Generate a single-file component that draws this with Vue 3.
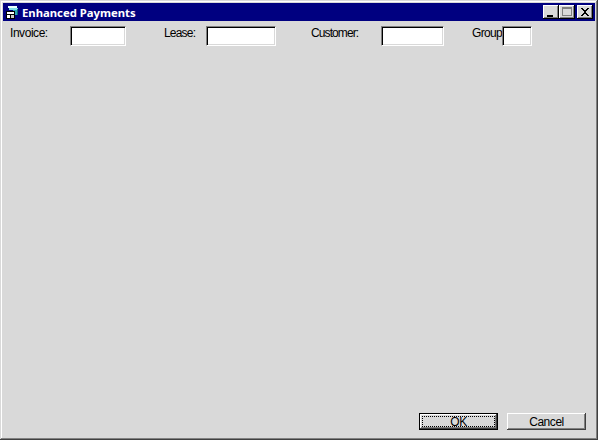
<script setup>
const fields = [
  { label: 'Invoice:', labelWidth: 60, inputWidth: 56, gapAfter: 38, tracking: -0.45 },
  { label: 'Lease:', labelWidth: 42, inputWidth: 70, gapAfter: 35, tracking: -0.8 },
  { label: 'Customer:', labelWidth: 70, inputWidth: 63, gapAfter: 28, tracking: -0.9 },
  { label: 'Group', labelWidth: 30, inputWidth: 30, gapAfter: 0, tracking: -0.7 },
]
</script>

<template>
  <div class="window">
    <div class="titlebar">
      <svg class="app-icon" width="16" height="16" viewBox="0 0 16 16" shape-rendering="crispEdges">
        <rect x="3" y="2" width="9" height="2" fill="#e8ffff" />
        <rect x="4" y="4" width="9" height="2" fill="#7fdce8" />
        <rect x="8" y="6" width="5" height="5" fill="#2aa6b8" />
        <rect x="12" y="5" width="1" height="6" fill="#0f6a7a" />
        <rect x="1" y="7" width="9" height="8" fill="#000" />
        <rect x="2" y="8" width="7" height="2" fill="#fff" />
        <rect x="2" y="11" width="3" height="3" fill="#fff" />
        <rect x="6" y="11" width="3" height="3" fill="#c8c8c8" />
      </svg>
      <span class="title">Enhanced Payments</span>
      <div class="caption-buttons">
        <button class="caption-btn" type="button" aria-label="Minimize">
          <svg width="16" height="14" viewBox="0 0 16 14" shape-rendering="crispEdges"><rect x="4" y="10" width="6" height="2" fill="#000" /></svg>
        </button>
        <button class="caption-btn" type="button" aria-label="Maximize">
          <svg width="16" height="14" viewBox="0 0 16 14" shape-rendering="crispEdges"><path d="M3.5 2.5h9v8h-9z" fill="none" stroke="#808080" /><rect x="3" y="2" width="10" height="2" fill="#808080" /></svg>
        </button>
        <button class="caption-btn close" type="button" aria-label="Close">
          <svg width="16" height="14" viewBox="0 0 16 14" shape-rendering="crispEdges"><path d="M4 3h2v1h1v1h2V4h1V3h2v1h-1v1h-1v1H9v2h1v1h1v1h1v1h-2v-1H9V9H7v1H6v1H4v-1h1V9h1V8h1V6H6V5H5V4H4z" fill="#000" /></svg>
        </button>
      </div>
    </div>

    <div class="filters">
      <div v-for="f in fields" :key="f.label" class="field" :style="{ marginRight: f.gapAfter + 'px' }">
        <label class="label" :style="{ width: f.labelWidth + 'px', letterSpacing: f.tracking + 'px' }">{{ f.label }}</label>
        <input class="input" type="text" :style="{ width: f.inputWidth + 'px' }" />
      </div>
    </div>

    <div class="spacer"></div>

    <div class="actions">
      <button class="btn default" type="button"><span class="focus">OK</span></button>
      <button class="btn" type="button">Cancel</button>
    </div>
  </div>
</template>

<style>
html, body { margin: 0; padding: 0; background: #d9d9d9; }
</style>

<style scoped>
.window {
  width: 598px;
  height: 440px;
  box-sizing: border-box;
  display: flex;
  flex-direction: column;
  padding: 3px;
  background: #d9d9d9;
  box-shadow: inset -1px -1px 0 #404040, inset 1px 1px 0 #d9d9d9, inset -2px -2px 0 #808080, inset 2px 2px 0 #fff;
  font-family: "Liberation Sans", Arial, sans-serif;
  font-size: 12px;
  letter-spacing: -0.45px;
  color: #000;
}
.titlebar {
  height: 18px;
  flex: none;
  background: #000080;
  display: flex;
  align-items: center;
  padding: 0 2px;
  box-sizing: border-box;
  letter-spacing: 0;
}
.app-icon { flex: none; margin-right: 1px; }
.title {
  font-family: "Noto Sans", "DejaVu Sans", sans-serif;
  font-weight: 700;
  font-size: 11.3px;
  color: #fff;
  white-space: nowrap;
}
.caption-buttons { margin-left: auto; display: flex; }
.caption-btn {
  width: 16px;
  height: 14px;
  padding: 0;
  margin: 0;
  border: 0;
  background: #d9d9d9;
  box-shadow: inset -1px -1px 0 #000, inset 1px 1px 0 #fff, inset -2px -2px 0 #808080;
  display: block;
  position: relative;
}
.caption-btn svg { display: block; }
.caption-btn.close { margin-left: 2px; }
.filters {
  display: flex;
  align-items: flex-start;
  padding: 5px 0 0 7px;
  flex: none;
}
.field { display: flex; align-items: flex-start; }
.label { display: block; line-height: 14px; white-space: nowrap; }
.input {
  height: 20px;
  box-sizing: border-box;
  padding: 0;
  margin: 0;
  background: #fff;
  border: 1px solid;
  border-color: #808080 #fff #fff #808080;
  box-shadow: inset 1px 1px 0 #000, inset -1px -1px 0 #d9d9d9;
  outline: none;
}
.spacer { flex: 1; }
.actions {
  display: flex;
  justify-content: flex-end;
  gap: 9px;
  padding: 0 9px 7px 0;
  flex: none;
}
.btn {
  width: 79px;
  height: 17px;
  padding: 0;
  margin: 0;
  border: 0;
  background: #d9d9d9;
  font: inherit;
  letter-spacing: inherit;
  color: #000;
  box-shadow: inset -1px -1px 0 #404040, inset 1px 1px 0 #fff, inset -2px -2px 0 #808080;
  display: flex;
  align-items: center;
  justify-content: center;
}
.btn.default {
  box-shadow: inset 0 0 0 1px #000, inset -2px -2px 0 #404040, inset 2px 2px 0 #fff, inset -3px -3px 0 #808080;
  padding: 3px;
  box-sizing: border-box;
}
.focus {
  flex: 1;
  height: 100%;
  box-sizing: border-box;
  border: 1px dotted #000;
  display: flex;
  align-items: center;
  justify-content: center;
  line-height: 1;
}
</style>
